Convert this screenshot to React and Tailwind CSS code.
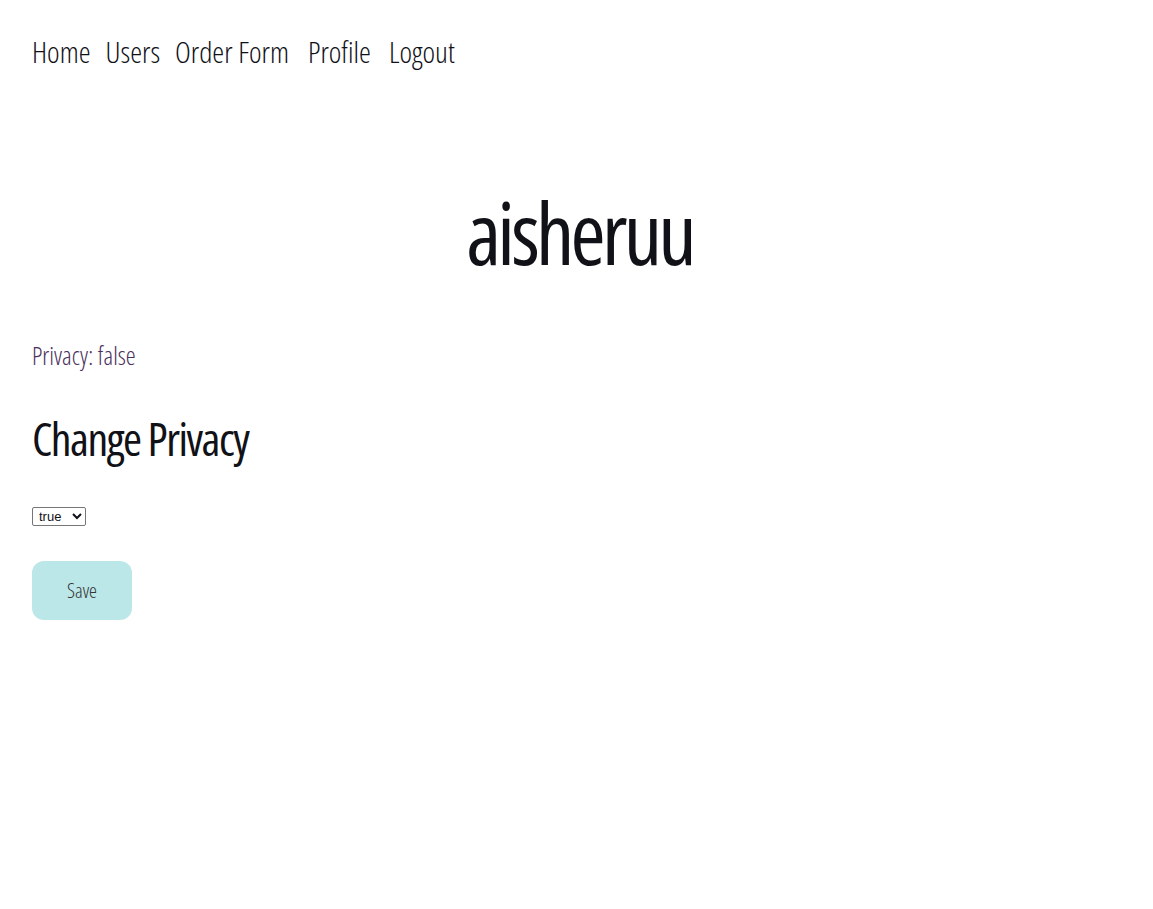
import React, { useState } from "react";

function App() {
  const [privacy, setPrivacy] = useState("true");

  return (
    <div className="min-h-screen bg-white px-8 pt-[29px] text-[#111118] font-['Open_Sans',sans-serif] [font-stretch:75%]">
      <nav className="flex items-center gap-[15px] text-[30px] font-light">
        <a href="#" className="text-[#111118]">Home</a>
        <a href="#" className="text-[#111118]">Users</a>
        <a href="#" className="text-[#111118] mr-[4px]">Order Form</a>
        <a href="#" className="text-[#111118] mr-[3px]">Profile</a>
        <a href="#" className="text-[#111118]">Logout</a>
      </nav>

      <h1 className="mt-[116px] pl-[6px] text-center text-[85px] font-medium leading-none tracking-[-3.75px]">
        aisheruu
      </h1>

      <p className="mt-[62px] text-[25px] font-light text-[#4a2f5c]">Privacy: false</p>

      <h2 className="mt-[35px] text-[46px] font-medium leading-tight tracking-[-1.5px]">
        Change Privacy
      </h2>

      <div className="mt-[36px]">
        <select
          value={privacy}
          onChange={(e) => setPrivacy(e.target.value)}
          className="border border-[#767676] rounded-[2px] text-[13px] font-['Liberation_Sans',sans-serif] [font-stretch:100%] px-[2px] py-0"
        >
          <option value="true">true</option>
          <option value="false">false</option>
        </select>
      </div>

      <button className="mt-[34px] w-[100px] h-[59px] rounded-xl bg-[#bce7e9] text-[20px] font-light text-[#333]">
        Save
      </button>
    </div>
  );
}

export default App;
